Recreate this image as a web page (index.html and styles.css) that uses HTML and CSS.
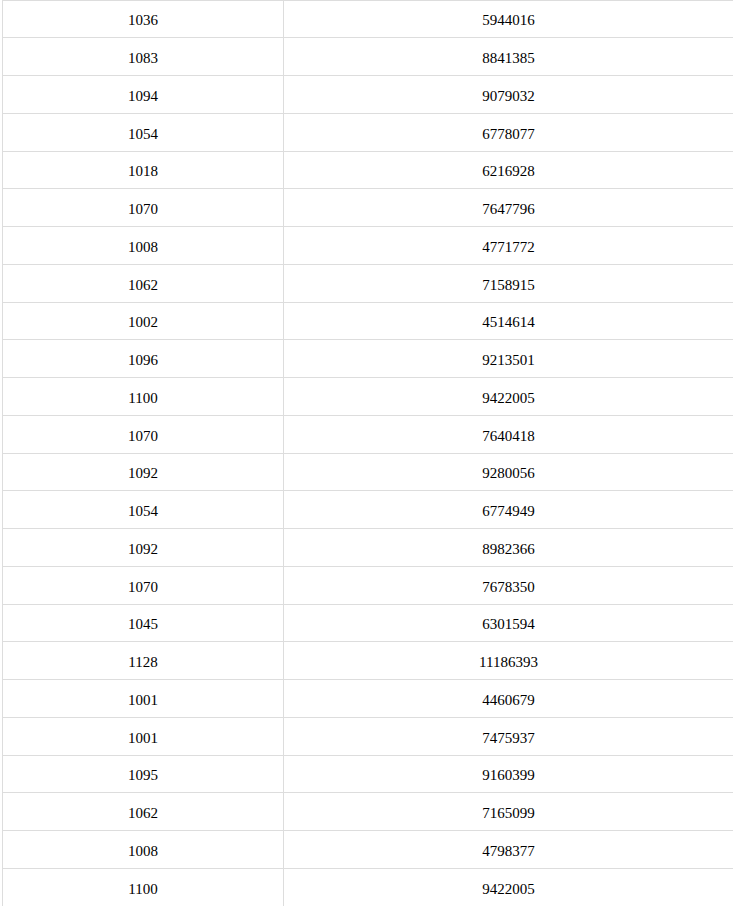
FILE: index.html
```html
<!DOCTYPE html>
<html>
<head>
<meta charset="utf-8">
<link rel="stylesheet" href="styles.css">
</head>
<body>
<table class="data">
<colgroup><col class="c1"><col class="c2"></colgroup>
<tbody>
<tr><td>1036</td><td>5944016</td></tr>
<tr><td>1083</td><td>8841385</td></tr>
<tr><td>1094</td><td>9079032</td></tr>
<tr><td>1054</td><td>6778077</td></tr>
<tr><td>1018</td><td>6216928</td></tr>
<tr><td>1070</td><td>7647796</td></tr>
<tr><td>1008</td><td>4771772</td></tr>
<tr><td>1062</td><td>7158915</td></tr>
<tr><td>1002</td><td>4514614</td></tr>
<tr><td>1096</td><td>9213501</td></tr>
<tr><td>1100</td><td>9422005</td></tr>
<tr><td>1070</td><td>7640418</td></tr>
<tr><td>1092</td><td>9280056</td></tr>
<tr><td>1054</td><td>6774949</td></tr>
<tr><td>1092</td><td>8982366</td></tr>
<tr><td>1070</td><td>7678350</td></tr>
<tr><td>1045</td><td>6301594</td></tr>
<tr><td>1128</td><td>11186393</td></tr>
<tr><td>1001</td><td>4460679</td></tr>
<tr><td>1001</td><td>7475937</td></tr>
<tr><td>1095</td><td>9160399</td></tr>
<tr><td>1062</td><td>7165099</td></tr>
<tr><td>1008</td><td>4798377</td></tr>
<tr><td>1100</td><td>9422005</td></tr>
</tbody>
</table>
</body>
</html>
```
FILE: styles.css
```css
html, body {
  margin: 0;
  padding: 0;
  background: #fff;
}
body {
  padding-left: 2px;
  font-family: "Liberation Serif", "Times New Roman", serif;
  font-size: 15px;
  color: #000;
}
.data {
  border-collapse: collapse;
  width: 731px;
  table-layout: fixed;
  margin-top: -0.5px;
}
.c1 { width: 281px; }
.c2 { width: 450px; }
.data tr {
  height: 37.75px;
}
.data td {
  border: 1px solid #dddddd;
  text-align: center;
  vertical-align: middle;
  padding: 4px 0 0 0;
  line-height: 17px;
}
```
